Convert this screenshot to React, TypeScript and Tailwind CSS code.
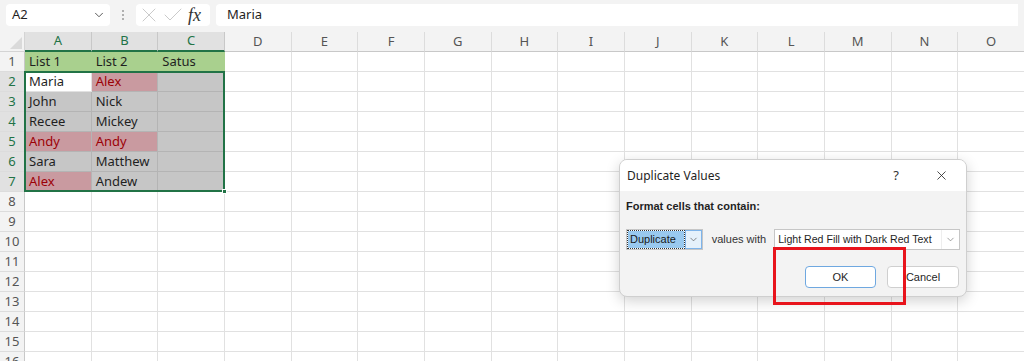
import React from 'react';
import { ChevronDown, X, Check } from 'lucide-react';

const columns = ['A', 'B', 'C', 'D', 'E', 'F', 'G', 'H', 'I', 'J', 'K', 'L', 'M', 'N', 'O'];

type Cell = { text?: string; kind?: 'head' | 'sel' | 'dup' | 'active' };

const data: Cell[][] = [
  [{ text: 'List 1', kind: 'head' }, { text: 'List 2', kind: 'head' }, { text: 'Satus', kind: 'head' }],
  [{ text: 'Maria', kind: 'active' }, { text: 'Alex', kind: 'dup' }, { kind: 'sel' }],
  [{ text: 'John', kind: 'sel' }, { text: 'Nick', kind: 'sel' }, { kind: 'sel' }],
  [{ text: 'Recee', kind: 'sel' }, { text: 'Mickey', kind: 'sel' }, { kind: 'sel' }],
  [{ text: 'Andy', kind: 'dup' }, { text: 'Andy', kind: 'dup' }, { kind: 'sel' }],
  [{ text: 'Sara', kind: 'sel' }, { text: 'Matthew', kind: 'sel' }, { kind: 'sel' }],
  [{ text: 'Alex', kind: 'dup' }, { text: 'Andew', kind: 'sel' }, { kind: 'sel' }],
];

const cellClass = (kind?: Cell['kind']) => {
  switch (kind) {
    case 'head':
      return 'bg-[#a9d08e] text-[#1f1f1f] border-[#a9d08e]';
    case 'sel':
      return 'bg-[#c6c6c6] text-[#1f1f1f] border-[#b4b4b4]';
    case 'dup':
      return 'bg-[#c99aa0] text-[#9c0006] border-[#b4b4b4]';
    case 'active':
      return 'bg-white text-[#1f1f1f] border-[#e1e1e1]';
    default:
      return 'bg-white border-[#e1e1e1]';
  }
};

const FormulaBar = () => (
  <div className="flex h-[32px] items-center gap-[6px] bg-[#f3f3f3] px-[6px] pb-[2px]">
    <div className="flex h-[22px] w-[104px] items-center justify-between rounded-[4px] bg-white pl-[6px] pr-[4px] text-[13px] text-[#1f1f1f]">
      <span>A2</span>
      <ChevronDown size={14} strokeWidth={1.5} className="text-[#444]" />
    </div>
    <div className="flex w-[14px] flex-col items-center gap-[2px]">
      <span className="h-[2px] w-[2px] rounded-full bg-[#9a9a9a]" />
      <span className="h-[2px] w-[2px] rounded-full bg-[#9a9a9a]" />
      <span className="h-[2px] w-[2px] rounded-full bg-[#9a9a9a]" />
    </div>
    <div className="flex h-[22px] w-[74px] items-center rounded-[4px] bg-white pl-[1px]">
      <X size={24} strokeWidth={0.9} className="text-[#c4c4c4]" />
      <Check size={24} strokeWidth={0.9} className="text-[#c4c4c4]" />
      <span className="ml-[3px] text-[18px] italic leading-none text-[#333]" style={{ fontFamily: '"Liberation Serif", serif' }}>
        fx
      </span>
    </div>
    <div className="flex h-[22px] flex-1 items-center rounded-l-[4px] bg-white pl-[11px] text-[13px] text-[#1f1f1f]">
      Maria
    </div>
  </div>
);

const Grid = () => (
  <div className="flex flex-col">
    {/* column headers */}
    <div className="flex h-[20px]">
      <div className="relative w-[25px] shrink-0 border-b border-r border-[#d4d4d4] bg-[#f3f3f3]">
        <div className="absolute bottom-[2px] right-[2px] h-0 w-0 border-b-[12px] border-l-[12px] border-b-[#dadada] border-l-transparent" />
      </div>
      {columns.map((c, i) => (
        <div
          key={c}
          className={
            i < 3
              ? 'flex w-[66.67px] shrink-0 items-center justify-center border-b-2 border-r border-b-[#217346] border-r-[#c8c8c8] bg-[#e1e1e1] text-[13px] text-[#217346]'
              : 'flex w-[66.67px] shrink-0 items-center justify-center border-b border-r border-b-[#c8c8c8] border-r-[#dcdcdc] bg-[#f3f3f3] text-[13px] text-[#555]'
          }
        >
          {c}
        </div>
      ))}
    </div>
    {Array.from({ length: 16 }, (_, r) => (
      <div key={r} className="flex h-[20px]">
        <div
          className={
            r >= 1 && r <= 6
              ? 'flex w-[25px] shrink-0 items-center justify-center border-b border-r border-b-[#dcdcdc] border-r-[#217346] bg-[#e1e1e1] text-[13px] text-[#217346]'
              : 'flex w-[25px] shrink-0 items-center justify-center border-b border-r border-b-[#dcdcdc] border-r-[#c8c8c8] bg-[#f3f3f3] text-[13px] text-[#555]'
          }
        >
          {r + 1}
        </div>
        {columns.map((c, ci) => {
          const cell = data[r]?.[ci];
          return (
            <div
              key={c}
              className={`flex w-[66.67px] shrink-0 items-center overflow-hidden whitespace-nowrap border-b border-r pl-[4px] text-[13px] ${cellClass(cell?.kind)}`}
            >
              {cell?.text}
            </div>
          );
        })}
      </div>
    ))}
  </div>
);

const Dialog = () => (
  <div className="absolute left-[619px] top-[159px] w-[348px] overflow-hidden rounded-[8px] border border-[#cfcfcf] bg-[#f3f3f3] shadow-[0_4px_14px_rgba(0,0,0,0.18)]">
    <div className="flex h-[31px] items-center bg-white pl-[7px] text-[12px] text-[#1f1f1f]">
      <span className="flex-1">Duplicate Values</span>
      <span className="w-[40px] text-center text-[13px] text-[#333]">?</span>
      <span className="flex w-[50px] justify-center">
        <X size={15} strokeWidth={1.3} className="text-[#222]" />
      </span>
    </div>
    <div
      className="whitespace-nowrap px-[6px] pb-[8px] pt-[7px] text-[11px] text-[#1f1f1f]"
      style={{ fontFamily: '"Liberation Sans", Arial, sans-serif' }}
    >
      <div className="flex h-[16px] items-center text-[11px] font-bold">Format cells that contain:</div>
      <div className="mt-[15px] flex h-[21px] items-center">
        <div className="flex h-[21px] w-[78px] items-center border border-[#c6c6c6] bg-white pl-[1px]">
          <span className="flex h-[17px] flex-1 items-center bg-[#99c9ef] pl-[2px] text-[#1a1a1a] outline-1 outline-dotted outline-[#333]">
            Duplicate
          </span>
          <span className="ml-[1px] flex h-[19px] w-[17px] items-center justify-center border border-[#7eb4ea] bg-[#e5f1fb]">
            <ChevronDown size={11} strokeWidth={1.5} className="text-[#555]" />
          </span>
        </div>
        <span className="ml-[9px] mr-[8px] text-[#333]">values with</span>
        <div className="flex h-[21px] w-[189px] items-center justify-between border border-[#c6c6c6] bg-white pl-[3px] text-[10.6px]">
          <span>Light Red Fill with Dark Red Text</span>
          <span className="flex h-[19px] w-[18px] items-center justify-center border-l border-[#eee]">
            <ChevronDown size={11} strokeWidth={1.5} className="text-[#777]" />
          </span>
        </div>
      </div>
      <div className="mt-[16px] flex justify-end gap-[11px] pr-[1px]">
        <button className="h-[22px] w-[71px] rounded-[4px] border border-[#6fa8e0] bg-white text-[11px] text-[#1f1f1f]">
          OK
        </button>
        <button className="h-[22px] w-[72px] rounded-[4px] border border-[#cfcfcf] bg-white text-[11px] text-[#1f1f1f]">
          Cancel
        </button>
      </div>
    </div>
  </div>
);

export default function App() {
  return (
    <div
      className="relative h-[361px] w-[1024px] overflow-hidden bg-white"
      style={{ fontFamily: '"Noto Sans", "Open Sans", sans-serif' }}
    >
      <FormulaBar />
      <Grid />

      {/* selection outline A2:C7 */}
      <div className="pointer-events-none absolute left-[24px] top-[71px] h-[121px] w-[201px] border-2 border-[#217346]" />
      <div className="absolute left-[222px] top-[189px] h-[5px] w-[5px] border border-white bg-[#217346]" />

      <Dialog />

      {/* red highlight */}
      <div className="pointer-events-none absolute left-[773px] top-[247px] h-[58px] w-[133px] border-[3px] border-[#e8141c]" />
    </div>
  );
}
